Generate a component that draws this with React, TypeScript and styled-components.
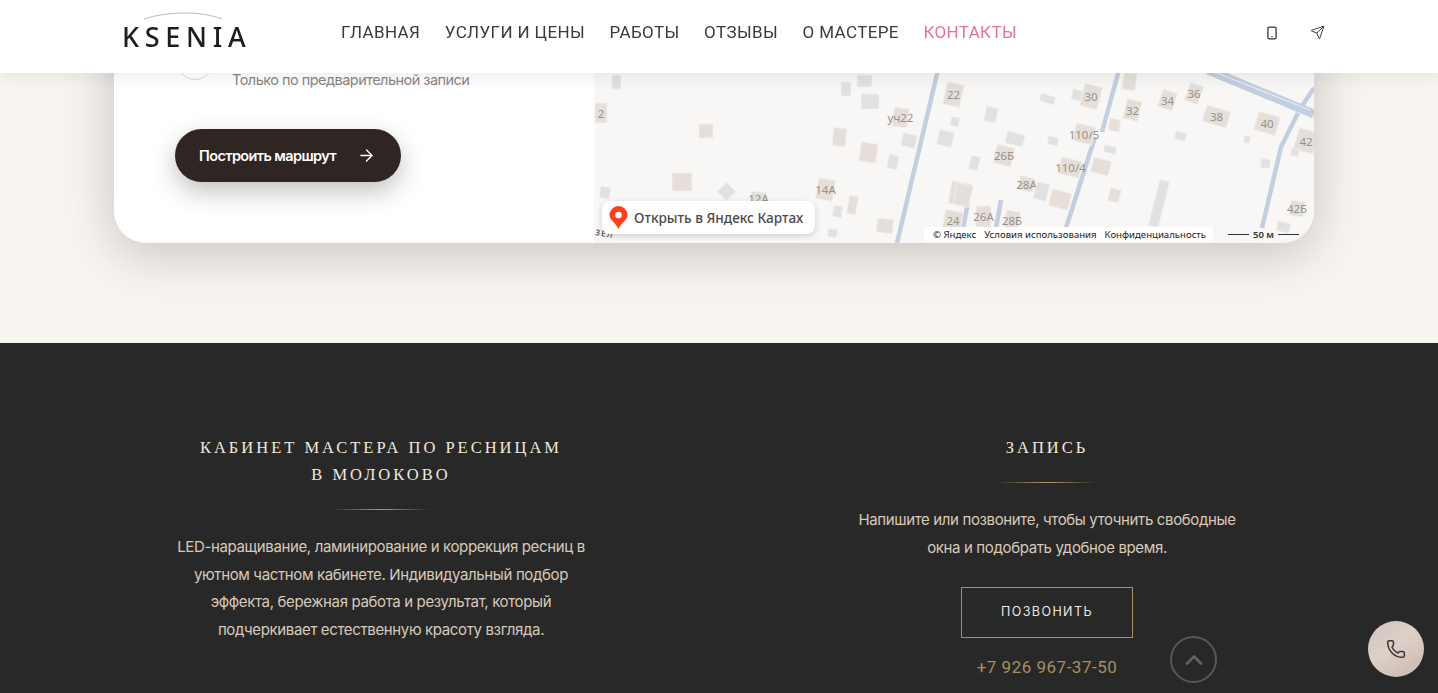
import React from 'react';
import styled, { createGlobalStyle } from 'styled-components';
import { ArrowRight, ChevronUp, Phone, Send, Smartphone } from 'lucide-react';

const GlobalStyle = createGlobalStyle`
	html, body {
		margin: 0;
		padding: 0;
		height: 693px;
		overflow: hidden;
		background: #282828;
	}
	* {
		box-sizing: border-box;
	}
`;

const Page = styled.div`
	width: 1438px;
	height: 693px;
	overflow: hidden;
	font-family: 'Inter', 'Liberation Sans', sans-serif;
`;

// шапка сайта
const Header = styled.header`
	position: fixed;
	top: 0;
	left: 0;
	z-index: 10;
	width: 100%;
	height: 73px;
	display: flex;
	align-items: center;
	padding: 0 113px 8px 122px;
	background: #fff;
	box-shadow: 0 3px 18px rgba(0, 0, 0, 0.08);
`;

const Logo = styled.a`
	position: relative;
	width: 125px;
	margin-top: 8px;
	font-family: 'Noto Sans', 'Open Sans', sans-serif;
	font-size: 27px;
	font-weight: 500;
	line-height: 28px;
	letter-spacing: 5.7px;
	color: #1e1e1e;
	white-space: nowrap;
`;

const LogoArc = styled.svg`
	position: absolute;
	top: -12px;
	left: 21px;
`;

const Nav = styled.nav`
	display: flex;
	gap: 24.5px;
	margin: 0 0 2px 94px;
`;

const NavLink = styled.a<{ $active?: boolean }>`
	font-family: 'Roboto', 'Liberation Sans', sans-serif;
	font-size: 17px;
	letter-spacing: 0.38px;
	color: ${(props) => (props.$active ? '#e270a5' : '#3a3a3a')};
	white-space: nowrap;
`;

const HeaderIcons = styled.div`
	display: flex;
	align-items: center;
	gap: 31px;
	margin-left: auto;
	color: #333;
`;

// блок с контактами и картой
const ContactSection = styled.section`
	height: 343px;
	padding: 0 124px 100px 114px;
	background: #f8f4f0;
	overflow: hidden;
`;

const Card = styled.div`
	display: flex;
	height: 243px;
	border-radius: 0 0 32px 32px;
	background: #fff;
	overflow: hidden;
	box-shadow: 0 10px 50px rgba(60, 50, 40, 0.26);
`;

const CardInfo = styled.div`
	width: 480px;
	flex-shrink: 0;
	display: flex;
	flex-direction: column;
	justify-content: flex-end;
	padding: 0 0 61px 61px;
`;

const InfoRow = styled.div`
	display: flex;
	align-items: flex-end;
	gap: 19px;
	margin-bottom: 39px;
`;

const InfoCircle = styled.span`
	width: 36px;
	height: 36px;
	flex-shrink: 0;
	margin: 0 0 10px 2px;
	border-radius: 50%;
	border: 1px solid #e6cfd2;
`;

const InfoText = styled.p`
	margin: 0;
	font-size: 14.5px;
	line-height: 20px;
	letter-spacing: -0.53px;
	color: #8b8684;
`;

const RouteButton = styled.a`
	display: flex;
	align-items: center;
	justify-content: space-between;
	width: 226px;
	height: 53px;
	padding: 0 25px 0 24px;
	border-radius: 27px;
	background: #2f2522;
	box-shadow: 0 10px 24px rgba(47, 37, 34, 0.28);
	font-size: 14.5px;
	font-weight: 600;
	letter-spacing: -0.62px;
	color: #fff;
`;

const MapBox = styled.div`
	position: relative;
	flex: 1;
	background: #f8f7f5;
`;

const MapDrawing = styled.svg`
	display: block;
	position: absolute;
	inset: 0;
`;

const HouseNumber = styled.text`
	font-family: 'Noto Sans', 'Liberation Sans', sans-serif;
	font-size: 11.5px;
	fill: #96918b;
	text-anchor: middle;
	dominant-baseline: central;
`;

const StreetName = styled.text`
	font-family: 'Noto Sans', 'Liberation Sans', sans-serif;
	font-size: 8px;
	font-weight: 600;
	letter-spacing: 1.2px;
	fill: #5c5c5c;
`;

const OpenMapLink = styled.a`
	position: absolute;
	left: 8px;
	bottom: 9px;
	display: flex;
	align-items: center;
	gap: 6px;
	width: 213px;
	height: 33px;
	padding-left: 7px;
	border-radius: 8px;
	background: #fff;
	box-shadow: 0 2px 6px rgba(0, 0, 0, 0.16);
	font-family: 'Noto Sans', 'Liberation Sans', sans-serif;
	font-size: 13.6px;
	font-weight: 500;
	color: #4a4a4a;
	white-space: nowrap;
`;

const MapCopyright = styled.div`
	position: absolute;
	left: 330px;
	bottom: 0;
	display: flex;
	gap: 8px;
	align-items: center;
	width: 289px;
	height: 16px;
	padding: 0 0 1px 9px;
	background: #fff;
	font-family: 'Noto Sans', 'Liberation Sans', sans-serif;
	font-size: 9.6px;
	color: #222;
	white-space: nowrap;
`;

const MapScale = styled.div`
	position: absolute;
	right: 15px;
	bottom: 2px;
	display: flex;
	align-items: center;
	gap: 4px;
	font-family: 'Noto Sans', 'Liberation Sans', sans-serif;
	font-size: 9.5px;
	font-weight: 600;
	color: #333;
`;

const ScaleLine = styled.span`
	width: 21px;
	height: 1px;
	background: #333;
`;

// подвал
const Footer = styled.footer`
	height: 350px;
	padding: 91px 124px 0 114px;
	background: #282828;
	overflow: hidden;
`;

const FooterGrid = styled.div`
	display: grid;
	grid-template-columns: 534px 534px;
	justify-content: space-between;
`;

const FooterColumn = styled.div`
	display: flex;
	flex-direction: column;
	align-items: center;
	text-align: center;
`;

const FooterTitle = styled.h3`
	margin: 0;
	font-family: 'Liberation Serif', serif;
	font-size: 16.5px;
	font-weight: 400;
	line-height: 27px;
	letter-spacing: 3px;
	color: #f0e8df;
`;

const Divider = styled.span`
	display: block;
	width: 100px;
	height: 1px;
	margin: 21px 0 23px;
	background: linear-gradient(90deg, rgba(184, 155, 110, 0), #b89b6e 50%, rgba(184, 155, 110, 0));
`;

const FooterText = styled.p<{ $width: number }>`
	width: ${(props) => props.$width}px;
	margin: 0;
	font-size: 15px;
	line-height: 27.7px;
	letter-spacing: -0.36px;
	color: #d8cabb;
`;

const CallButton = styled.a`
	display: flex;
	align-items: center;
	justify-content: center;
	width: 172px;
	height: 51px;
	margin-top: 26px;
	padding-bottom: 2px;
	border: 1px solid #a98e5f;
	font-size: 12.5px;
	letter-spacing: 1.4px;
	color: #eee7df;
`;

const PhoneLink = styled.a`
	margin-top: 19px;
	font-family: 'Roboto', 'Liberation Sans', sans-serif;
	font-size: 17px;
	line-height: 20px;
	letter-spacing: 0.5px;
	color: #a98e5f;
`;

const ScrollTop = styled.button`
	position: fixed;
	left: 1170px;
	top: 636px;
	width: 47px;
	height: 47px;
	display: flex;
	align-items: center;
	justify-content: center;
	padding: 0;
	border-radius: 50%;
	border: 2px solid #585858;
	background: transparent;
	color: #626262;
`;

const FloatingCall = styled.button`
	position: fixed;
	left: 1368px;
	top: 621px;
	width: 56px;
	height: 56px;
	display: flex;
	align-items: center;
	justify-content: center;
	padding: 0;
	border: 0;
	border-radius: 50%;
	background: linear-gradient(145deg, #d2c3bb, #ddd0c9 45%, #c9b8ae);
	color: #3f3330;
`;

type House = { x: number; y: number; w: number; h: number; r?: number; t?: 'b' | 'g'; n?: string };

// дома на карте: координаты как на скриншоте
const houses: House[] = [
	{ x: 612, y: 75, w: 9, h: 14, t: 'g' }, { x: 857, y: 75, w: 15, h: 12, t: 'g' }, { x: 841, y: 82, w: 10, h: 14, t: 'g' },
	{ x: 861, y: 94, w: 18, h: 15, t: 'g' }, { x: 595, y: 103, w: 12, h: 20, n: '2' }, { x: 699, y: 124, w: 14, h: 14 },
	{ x: 833, y: 128, w: 13, h: 18, r: 5 }, { x: 860, y: 143, w: 17, h: 19, r: 8 }, { x: 888, y: 155, w: 10, h: 14, r: 10, t: 'g' },
	{ x: 902, y: 134, w: 14, h: 13, r: 12, t: 'g' }, { x: 938, y: 131, w: 15, h: 15, r: 12, t: 'g' }, { x: 951, y: 117, w: 8, h: 9, r: 8, t: 'g' },
	{ x: 945, y: 83, w: 17, h: 23, r: 12, n: '22' }, { x: 893, y: 108, w: 15, h: 19, r: 8, n: 'уч22' }, { x: 672, y: 173, w: 20, h: 18 },
	{ x: 720, y: 185, w: 13, h: 13, r: 45, t: 'g' }, { x: 600, y: 187, w: 10, h: 11, r: 8, t: 'g' }, { x: 751, y: 192, w: 15, h: 12, r: 6, n: '12А' },
	{ x: 817, y: 179, w: 17, h: 21, r: 10, n: '14А' }, { x: 848, y: 196, w: 9, h: 18, r: 10 }, { x: 833, y: 206, w: 9, h: 11, r: 8, t: 'g' },
	{ x: 877, y: 219, w: 16, h: 14, r: 6 }, { x: 828, y: 229, w: 9, h: 8, r: 6, t: 'g' }, { x: 950, y: 182, w: 20, h: 23, r: 10 },
	{ x: 944, y: 211, w: 18, h: 18, r: 10, n: '24' }, { x: 1082, y: 85, w: 18, h: 23, r: 14, n: '30' }, { x: 1072, y: 90, w: 10, h: 10, r: 14, t: 'g' },
	{ x: 1123, y: 73, w: 13, h: 17, r: 8 }, { x: 1040, y: 95, w: 15, h: 8, r: 18, t: 'g' }, { x: 985, y: 107, w: 12, h: 15, r: 12, t: 'g' },
	{ x: 1125, y: 100, w: 15, h: 20, r: 14, n: '32' }, { x: 1160, y: 91, w: 15, h: 18, r: 18, n: '34' }, { x: 1187, y: 84, w: 14, h: 19, r: 20, n: '36' },
	{ x: 1204, y: 108, w: 25, h: 17, r: 16, n: '38' }, { x: 1256, y: 114, w: 22, h: 19, r: 16, n: '40' }, { x: 1296, y: 130, w: 20, h: 22, r: 16, n: '42' },
	{ x: 1109, y: 119, w: 11, h: 12, r: 10 }, { x: 1175, y: 132, w: 11, h: 8, r: 12, t: 'g' }, { x: 1244, y: 136, w: 6, h: 7, r: 12, t: 'g' },
	{ x: 1074, y: 125, w: 20, h: 18, r: 14, n: '110/5' }, { x: 1048, y: 137, w: 10, h: 8, r: 12, t: 'g' }, { x: 1006, y: 133, w: 18, h: 12, r: 14, t: 'g' },
	{ x: 995, y: 146, w: 18, h: 19, r: 14, n: '26Б' }, { x: 970, y: 156, w: 9, h: 14, r: 14, t: 'g' }, { x: 1104, y: 146, w: 12, h: 7, r: 14, t: 'g' },
	{ x: 1060, y: 159, w: 21, h: 17, r: 14, n: '110/4' }, { x: 1092, y: 159, w: 18, h: 15, r: 14 }, { x: 1019, y: 177, w: 15, h: 14, r: 14, n: '28А' },
	{ x: 1035, y: 183, w: 13, h: 17, r: 14, t: 'g' }, { x: 1050, y: 191, w: 20, h: 17, r: 14 }, { x: 1109, y: 189, w: 11, h: 13, r: 14 },
	{ x: 1154, y: 180, w: 10, h: 47, r: 14, t: 'g' }, { x: 955, y: 184, w: 16, h: 22, r: 12 }, { x: 1261, y: 159, w: 9, h: 9, r: 6, t: 'g' },
	{ x: 1291, y: 149, w: 8, h: 7, r: 6, t: 'g' }, { x: 976, y: 206, w: 15, h: 21, n: '26А' }, { x: 1005, y: 211, w: 14, h: 18, r: 10, n: '28Б' },
	{ x: 1290, y: 201, w: 14, h: 15, r: 8, n: '42Б' }, { x: 1277, y: 222, w: 13, h: 10, r: 14, t: 'g' },
];

const roads = [
	'M938 70 L897 243',
	'M1119 70 L1102 132',
	'M1095 137 L1066 228',
	'M1298 113 L1281 147 L1262 228',
	'M1314 88 L1302 106',
	'M968 203 L963 228',
	'M1001 200 L996 228',
];

const navItems = ['ГЛАВНАЯ', 'УСЛУГИ И ЦЕНЫ', 'РАБОТЫ', 'ОТЗЫВЫ', 'О МАСТЕРЕ', 'КОНТАКТЫ'];

function YandexMap() {
	return (
		<MapBox>
			<MapDrawing width='720' height='243' viewBox='594 0 720 243'>
				{roads.map((d) => (
					<path key={d} d={d} fill='none' stroke='#c3cfe0' strokeWidth='4.5' />
				))}
				<path d='M1208 70 L1314 114' fill='none' stroke='#c3cfe0' strokeWidth='9' />
				<path d='M1212 71 L1310 110' fill='none' stroke='#eef1f5' strokeWidth='1' />
				{houses.map((h) => {
					const cx = h.x + h.w / 2;
					const cy = h.y + h.h / 2;
					return (
						<g key={`${h.x}-${h.y}`}>
							<rect
								x={h.x}
								y={h.y}
								width={h.w}
								height={h.h}
								fill={h.t === 'g' ? '#e0e1e3' : '#e6dfd9'}
								stroke='#f1efec'
								strokeWidth='0.8'
								transform={`rotate(${h.r || 0} ${cx} ${cy})`}
							/>
							{h.n && (
								<HouseNumber x={cx} y={cy}>
									{h.n}
								</HouseNumber>
							)}
						</g>
					);
				})}
				<StreetName x='595' y='235' transform='rotate(9 595 235)'>
					ЗЕЛ
				</StreetName>
			</MapDrawing>
			<OpenMapLink>
				<svg width='19' height='23' viewBox='0 0 19 23'>
					<path d='M9.5 0a9 9 0 0 1 9 9c0 5-5.500 7-9 14C6 16 .5 14 .5 9a9 9 0 0 1 9-9z' fill='#fc3f1d' />
					<circle cx='9.500' cy='9' r='3.300' fill='#fff' />
				</svg>
				Открыть в Яндекс Картах
			</OpenMapLink>
			<MapCopyright>
				<span>© Яндекс</span>
				<span>Условия использования</span>
				<span>Конфиденциальность</span>
			</MapCopyright>
			<MapScale>
				<ScaleLine />
				50 м
				<ScaleLine />
			</MapScale>
		</MapBox>
	);
}

function App() {
	return (
		<Page>
			<GlobalStyle />
			<Header>
				<Logo>
					<LogoArc width='80' height='10' viewBox='0 0 80 10'>
						<path d='M1 8 C 22 1, 56 -1, 79 8' fill='none' stroke='#b9a595' strokeWidth='0.8' />
					</LogoArc>
					KSENIA
				</Logo>
				<Nav>
					{navItems.map((item) => (
						<NavLink key={item} $active={item === 'КОНТАКТЫ'}>
							{item}
						</NavLink>
					))}
				</Nav>
				<HeaderIcons>
					<Smartphone size={14} strokeWidth={2.2} />
					<Send size={15} strokeWidth={1.5} />
				</HeaderIcons>
			</Header>
			<ContactSection>
				<Card>
					<CardInfo>
						<InfoRow>
							<InfoCircle />
							<InfoText>Только по предварительной записи</InfoText>
						</InfoRow>
						<RouteButton>
							Построить маршрут
							<ArrowRight size={19} strokeWidth={1.7} />
						</RouteButton>
					</CardInfo>
					<YandexMap />
				</Card>
			</ContactSection>
			<Footer>
				<FooterGrid>
					<FooterColumn>
						<FooterTitle>
							КАБИНЕТ МАСТЕРА ПО РЕСНИЦАМ
							<br />В МОЛОКОВО
						</FooterTitle>
						<Divider />
						<FooterText $width={420}>
							LED-наращивание, ламинирование и коррекция ресниц в уютном частном кабинете. Индивидуальный подбор
							эффекта, бережная работа и результат, который подчеркивает естественную красоту взгляда.
						</FooterText>
					</FooterColumn>
					<FooterColumn>
						<FooterTitle>ЗАПИСЬ</FooterTitle>
						<Divider />
						<FooterText $width={400}>
							Напишите или позвоните, чтобы уточнить свободные окна и подобрать удобное время.
						</FooterText>
						<CallButton>ПОЗВОНИТЬ</CallButton>
						<PhoneLink>+7 926 967-37-50</PhoneLink>
					</FooterColumn>
				</FooterGrid>
			</Footer>
			<ScrollTop>
				<ChevronUp size={28} strokeWidth={2.4} />
			</ScrollTop>
			<FloatingCall>
				<Phone size={20} strokeWidth={1.8} />
			</FloatingCall>
		</Page>
	);
}

export default App;
